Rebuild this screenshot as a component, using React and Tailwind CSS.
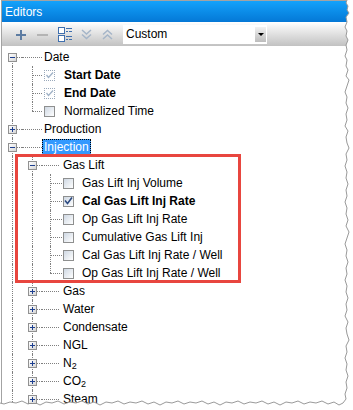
import React from "react";

const LINE = "border-[#7f7f7f] border-dotted";

const Expander = ({ open }) => (
  <span className="absolute left-[6px] top-[5px] z-10 h-[9px] w-[9px] border border-[#919191] bg-linear-to-br from-white to-[#d6d6d6]">
    <span className="absolute left-[1px] top-[3px] h-px w-[5px] bg-[#1d3f8f]" />
    {!open && <span className="absolute left-[3px] top-[1px] h-[5px] w-px bg-[#1d3f8f]" />}
  </span>
);

// one indent column of the tree, with its dotted guides
const Guide = ({ w = "w-[20px]", at = "left-[10px]", v, h, box }) => (
  <div className={`relative h-full shrink-0 ${w}`}>
    {v === "full" && <span className={`absolute top-0 h-full border-l ${LINE} ${at}`} />}
    {v === "top" && <span className={`absolute top-0 h-[9px] border-l ${LINE} ${at}`} />}
    {v === "bottom" && <span className={`absolute top-[9px] bottom-0 border-l ${LINE} ${at}`} />}
    {h === "right" && <span className={`absolute top-[9px] right-0 border-t ${LINE} ${at}`} />}
    {h === "full" && <span className={`absolute top-[9px] left-0 right-0 border-t ${LINE}`} />}
    {h === "stub" && <span className={`absolute top-[9px] left-0 w-[17px] border-t ${LINE}`} />}
    {box && <Expander open={box === "minus"} />}
  </div>
);

const Check = ({ state, className }) => {
  if (state === "disabled") {
    return (
      <span className={`relative h-[11px] w-[11px] shrink-0 border border-dotted border-[#9aa9bb] bg-white ${className}`}>
        <svg width="9" height="9" viewBox="0 0 9 9" className="absolute left-0 top-0">
          <polyline points="1.5,4 3.5,6.5 8,1.5" fill="none" stroke="#9fb1c6" strokeWidth="1.3" />
        </svg>
      </span>
    );
  }
  return (
    <span className={`relative h-[11px] w-[11px] shrink-0 border border-[#8e8f8f] bg-linear-to-br from-[#cfd8e3] to-white ${className}`}>
      {state === "checked" && (
        <svg width="9" height="9" viewBox="0 0 9 9" className="absolute left-0 top-0">
          <polyline points="1,3.5 3.5,6.5 8,0.5" fill="none" stroke="#2c4a80" strokeWidth="1.6" />
        </svg>
      )}
    </span>
  );
};

const Row = ({ children }) => <div className="flex h-[18px] items-center">{children}</div>;

const Label = ({ children, bold, className = "" }) => (
  <span className={`whitespace-nowrap px-[2px] text-[12px] leading-[16px] text-black ${bold ? "font-bold" : ""} ${className}`}>
    {children}
  </span>
);

const LeafRow = ({ label, state, last, bold }) => (
  <Row>
    <Guide v="full" />
    <Guide v={last ? "top" : "full"} h="right" />
    <Check state={state} className="ml-[2px]" />
    <Label bold={bold} className="ml-[7px]">{label}</Label>
  </Row>
);

const GroupRow = ({ label, open }) => (
  <Row>
    <Guide v="full" />
    <Guide v="full" h="right" box={open ? "minus" : "plus"} />
    <Guide w="w-[19px]" h="stub" />
    <Label>{label}</Label>
  </Row>
);

const SubRow = ({ label, checked, last }) => (
  <Row>
    <Guide v="full" />
    <Guide v="full" />
    <Guide at="left-[8px]" v={last ? "top" : "full"} h="right" />
    <Check state={checked ? "checked" : "off"} className="ml-[1px]" />
    <Label bold={checked} className="ml-[6px]">{label}</Label>
  </Row>
);

const gasLift = [
  "Gas Lift Inj Volume",
  "Cal Gas Lift Inj Rate",
  "Op Gas Lift Inj Rate",
  "Cumulative Gas Lift Inj",
  "Cal Gas Lift Inj Rate / Well",
  "Op Gas Lift Inj Rate / Well",
];

const sub2 = <sub className="text-[9px] leading-none">2</sub>;

const others = ["Gas", "Water", "Condensate", "NGL", <>N{sub2}</>, <>CO{sub2}</>, "Steam"];

const tearRight =
  "347,0 346,3 348,6 347,10 349,13 346,17 347,22 345,27 347,31 346,36 348,40 346,45 347,50 345,56 347,60 346,66 348,70 346,76 349,80 347,86 345,92 347,97 346,103 348,108 346,114 347,120 345,126 348,131 346,137 347,143 349,148 346,154 347,160 345,166 347,172 346,178 348,184 346,190 347,196 345,202 347,208 346,214 348,220 346,226 349,232 347,238 345,244 347,250 346,256 348,262 346,268 347,274 345,280 347,286 346,292 348,298 346,304 347,310 345,316 348,322 346,328 347,334 349,340 346,346 347,352 345,358 347,364 346,370 348,376 346,382 347,388 345,394 346,399 343,403";
const tearBottom =
  "339,405 334,402 328,404 322,401 316,403 310,402 304,404 298,401 292,403 286,402 280,405 274,402 268,404 262,401 256,403 250,402 244,404 238,401 232,403 226,402 220,405 214,402 208,404 202,401 196,403 190,402 184,404 178,401 172,403 166,402 160,405 154,402 148,404 142,401 136,403 130,402 124,404 118,401 112,403 106,402 100,405 94,402 88,404 82,401 76,403 70,402 64,404 58,401 52,403 46,402 40,405 34,402 28,404 22,401 16,403 10,402 4,404 0,403";

export default function App() {
  return (
    <div className="relative h-[410px] w-[353px] overflow-hidden bg-white font-['Liberation_Sans',Arial,sans-serif]">
      <div className="ml-px h-full border-l border-t border-[#a3a3a3]">
        <div className="flex h-[21px] items-center bg-linear-to-b from-[#14a2fb] to-[#0578d6] pl-[3px] text-[12px] text-white">
          Editors
        </div>

        <div className="flex h-[24px] items-center border-t border-white bg-linear-to-b from-[#fdfdfd] to-[#c2c2c2] pl-[13px]">
          <svg width="12" height="12" viewBox="0 0 12 12" className="shrink-0">
            <rect x="5" y="1" width="2" height="10" fill="#5d7ca2" />
            <rect x="1" y="5" width="10" height="2" fill="#5d7ca2" />
          </svg>
          <svg width="12" height="12" viewBox="0 0 12 12" className="ml-[9px] shrink-0">
            <rect x="1" y="5" width="11" height="2" fill="#b4b4b4" />
          </svg>
          <svg width="16" height="16" viewBox="0 0 16 16" className="ml-[9px] shrink-0">
            <rect x="1.5" y="0.5" width="6" height="6" fill="white" stroke="#3f6fae" />
            <rect x="1.5" y="8.5" width="6" height="6" fill="white" stroke="#3f6fae" />
            <rect x="9" y="1" width="6" height="1" fill="#3f6fae" />
            <rect x="9" y="4" width="2" height="1" fill="#3f6fae" />
            <rect x="12" y="4" width="3" height="1" fill="#3f6fae" />
            <rect x="9" y="9" width="6" height="1" fill="#3f6fae" />
            <rect x="9" y="12" width="2" height="1" fill="#3f6fae" />
            <rect x="12" y="12" width="3" height="1" fill="#3f6fae" />
          </svg>
          <svg width="11" height="13" viewBox="0 0 11 13" className="ml-[8px] shrink-0">
            <polyline points="1,2 5.5,6 10,2" fill="none" stroke="#a5b5c8" strokeWidth="1.5" />
            <polyline points="1,6.5 5.5,10.5 10,6.5" fill="none" stroke="#a5b5c8" strokeWidth="1.5" />
          </svg>
          <svg width="11" height="13" viewBox="0 0 11 13" className="ml-[10px] shrink-0">
            <polyline points="1,6.5 5.5,2.5 10,6.5" fill="none" stroke="#a5b5c8" strokeWidth="1.5" />
            <polyline points="1,11 5.5,7 10,11" fill="none" stroke="#a5b5c8" strokeWidth="1.5" />
          </svg>
          <div className="ml-[10px] flex h-[19px] w-[144px] items-stretch bg-white">
            <span className="flex-1 pl-[3px] text-[12px] leading-[19px] text-black">Custom</span>
            <span className="my-px flex w-[13px] items-center justify-center border border-white bg-linear-to-b from-[#f2f2f2] to-[#bcbcbc]">
              <span className="h-0 w-0 border-x-[3px] border-t-[3px] border-x-transparent border-t-black" />
            </span>
          </div>
        </div>

        <div className="pt-[2px]">
          <Row>
            <Guide v="bottom" h="right" box="minus" />
            <Guide h="full" />
            <Label>Date</Label>
          </Row>
          <LeafRow label="Start Date" state="disabled" bold />
          <LeafRow label="End Date" state="disabled" bold />
          <LeafRow label="Normalized Time" state="off" last />
          <Row>
            <Guide v="full" h="right" box="plus" />
            <Guide h="full" />
            <Label>Production</Label>
          </Row>
          <Row>
            <Guide v="full" h="right" box="minus" />
            <Guide h="full" />
            <span className="flex h-[16px] items-center border border-dotted border-black bg-[#3399ff] px-[1px] text-[12px] text-white">
              Injection
            </span>
          </Row>
          <GroupRow label="Gas Lift" open />
          {gasLift.map((label, i) => (
            <SubRow key={label} label={label} checked={i === 1} last={i === gasLift.length - 1} />
          ))}
          {others.map((label, i) => (
            <GroupRow key={i} label={label} />
          ))}
        </div>
      </div>

      <div className="pointer-events-none absolute left-[15px] top-[154px] h-[129px] w-[226px] border-[3px] border-[#e8463f]" />

      <svg width="353" height="410" className="pointer-events-none absolute left-0 top-0">
        <polygon points={`${tearRight} ${tearBottom} 0,410 353,410 353,0`} fill="white" />
        <polyline points={`${tearRight} ${tearBottom}`} fill="none" stroke="#9a9a9a" strokeWidth="1" />
      </svg>
    </div>
  );
}
